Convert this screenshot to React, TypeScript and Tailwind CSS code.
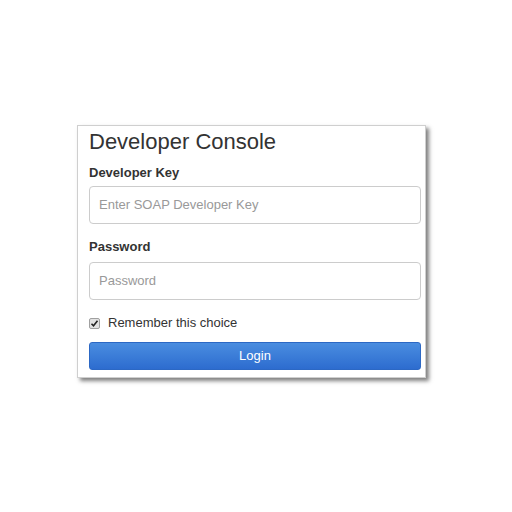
import React from "react";

export default function App() {
  return (
    <div className="w-[512px] h-[512px] bg-white pt-[125px] pl-[77px]" style={{ fontFamily: '"Liberation Sans", Arial, sans-serif' }}>
      <div className="w-[349px] h-[253px] border border-[#cfcfcf] bg-white shadow-[3px_3px_4px_rgba(0,0,0,0.5)] pl-[11px] pr-[4px] pt-[4px]">
        <div className="text-[22px] leading-[24px] text-[#333]">Developer Console</div>
        <div className="mt-[10px] mb-[4px] text-[13px] leading-[18px] font-bold text-[#333]">Developer Key</div>
        <div className="h-[38px] border border-[#cccccc] rounded-[4px] flex items-center pl-[9px] text-[13px] text-[#999]">
          Enter SOAP Developer Key
        </div>
        <div className="mt-[14px] mb-[6px] text-[13px] leading-[18px] font-bold text-[#333]">Password</div>
        <div className="h-[38px] border border-[#cccccc] rounded-[4px] flex items-center pl-[9px] text-[13px] text-[#999]">
          Password
        </div>
        <div className="mt-[14px] h-[18px] flex items-center text-[13px] text-[#333]">
          <div className="w-[11px] h-[11px] mr-[8px] rounded-[2px] border border-[#a0a0a0] bg-[#e2e2e2] flex items-center justify-center">
            <svg width="9" height="9" viewBox="0 0 9 9">
              <path d="M1.5 4.8 L3.5 6.8 L7.5 1.8" stroke="#222" strokeWidth="1.6" fill="none" />
            </svg>
          </div>
          <span>Remember this choice</span>
        </div>
        <div className="mt-[10px] h-[28px] rounded-[3px] border border-[#2c68c4] bg-gradient-to-b from-[#4a8de0] to-[#2d6ccf] flex items-center justify-center text-[13px] text-white">
          Login
        </div>
      </div>
    </div>
  );
}
